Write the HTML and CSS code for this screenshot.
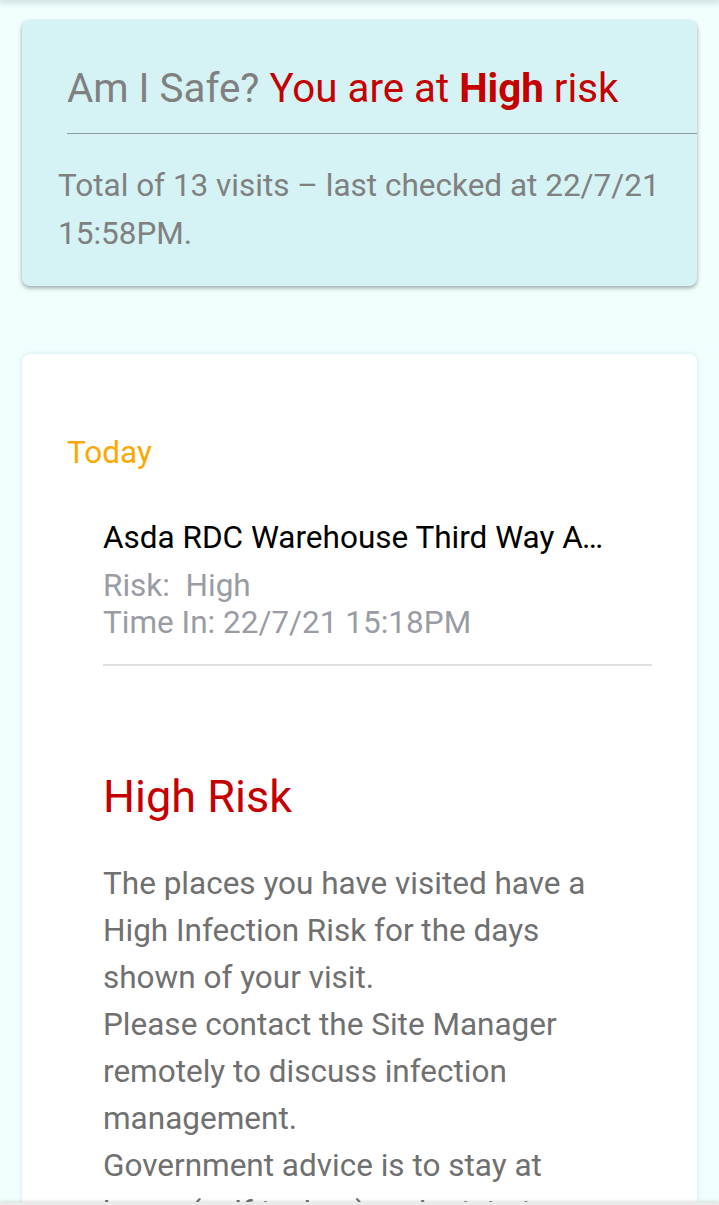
FILE: index.html
```html
<!DOCTYPE html>
<html lang="en">
<head>
<meta charset="utf-8">
<title>Am I Safe?</title>
<link rel="stylesheet" href="styles.css">
</head>
<body>
<div class="topshade"></div>
<main class="page">
  <section class="card summary">
    <h1 class="title">Am I Safe? <span class="risk">You are at <b>High</b> risk</span></h1>
    <hr class="rule">
    <p class="sub">Total of 13 visits – last checked at 22/7/21 15:58PM.</p>
  </section>
  <section class="card visits">
    <h2 class="day">Today</h2>
    <div class="item">
      <div class="name">Asda RDC Warehouse Third Way Avonmouth Bristol</div>
      <div class="meta">Risk:&nbsp; High</div>
      <div class="meta">Time In: 22/7/21 15:18PM</div>
    </div>
    <hr class="item-rule">
    <div class="advice">
      <h3 class="advice-title">High Risk</h3>
      <p class="advice-text">The places you have visited have a High Infection Risk for the days shown of your visit.<br>Please contact the Site Manager remotely to discuss infection management.<br>Government advice is to stay at home (self-isolate) and minimise contact with others.</p>
    </div>
  </section>
</main>
<div class="bottombar"></div>
</body>
</html>
```
FILE: styles.css
```css
html, body {
  margin: 0;
  padding: 0;
}
body {
  background: #f0fefe;
  font-family: Roboto, "Liberation Sans", sans-serif;
  height: 1205px;
  overflow: hidden;
}
.topshade {
  height: 0;
  box-shadow: 0 0 6px 2px rgba(120, 140, 140, 0.45);
}
.page {
  padding: 20px 22px 0 22px;
  display: flex;
  flex-direction: column;
  gap: 68px;
}
.card {
  border-radius: 8px;
}
.summary {
  background: #d5f3f5;
  box-shadow: 0 2px 4px rgba(0, 0, 0, 0.35);
  padding: 45px 0 28px 0;
}
.title {
  margin: 0 0 0 45px;
  font-size: 40.3px;
  line-height: 47px;
  font-weight: 400;
  color: #808080;
  white-space: nowrap;
}
.risk {
  color: #c40000;
}
.risk b {
  font-weight: 700;
}
.rule {
  margin: 21px 0 0 45px;
  border: 0;
  height: 1px;
  background: #8c9a9c;
}
.sub {
  margin: 28px 30px 0 36px;
  font-size: 31.5px;
  line-height: 48px;
  color: #808080;
}
.visits {
  background: #ffffff;
  box-shadow: 0 0 4px rgba(120, 160, 160, 0.25);
  padding: 79px 45px 0 45px;
  height: 900px;
}
.day {
  margin: 0;
  font-size: 31.5px;
  line-height: 40px;
  font-weight: 400;
  color: #fca800;
}
.item {
  margin: 45px 0 0 36px;
}
.name {
  font-size: 31.5px;
  line-height: 40px;
  color: #000;
  width: 505px;
  white-space: nowrap;
  overflow: hidden;
  text-overflow: ellipsis;
}
.name + .meta {
  margin-top: 9px;
}
.meta {
  font-size: 31.5px;
  line-height: 37px;
  color: #9a9ca4;
}
.item-rule {
  margin: 23px 0 0 36px;
  border: 0;
  height: 2px;
  background: #e0e0e0;
}
.advice {
  margin: 103px 0 0 36px;
}
.advice-title {
  margin: 0;
  font-size: 45px;
  line-height: 56px;
  font-weight: 400;
  color: #c40000;
}
.advice-text {
  margin: 35px 0 0 0;
  width: 500px;
  font-size: 31.5px;
  line-height: 47px;
  color: #707070;
}
.bottombar {
  position: fixed;
  left: 0;
  right: 0;
  bottom: 0;
  height: 3px;
  background: #e9ebeb;
  box-shadow: 0 -1px 3px rgba(0, 0, 0, 0.12);
}
```
